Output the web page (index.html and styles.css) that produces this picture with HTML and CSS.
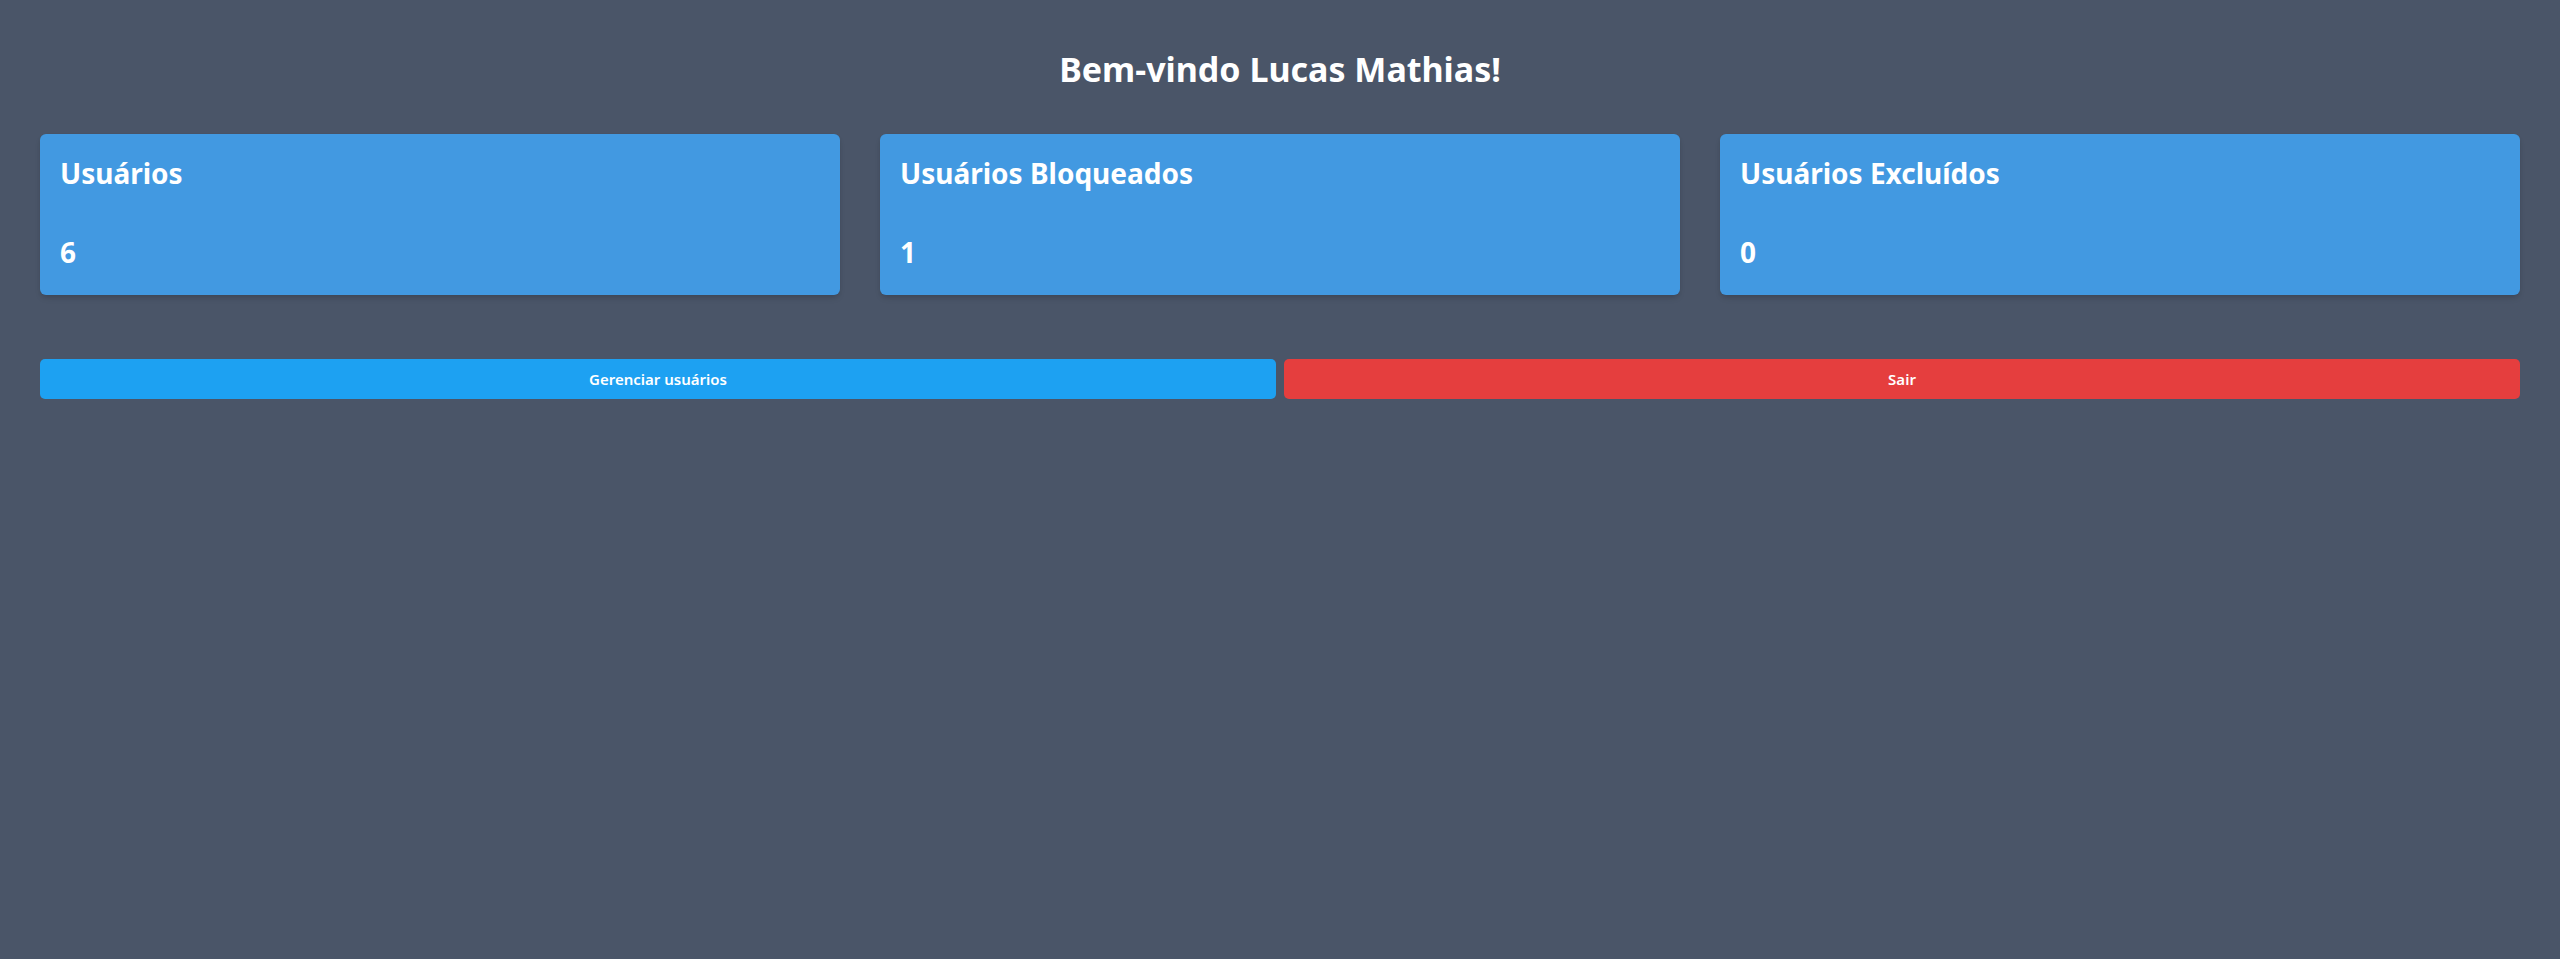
FILE: index.html
```html
<!DOCTYPE html>
<html lang="pt-BR">
<head>
<meta charset="utf-8">
<title>Dashboard</title>
<link rel="stylesheet" href="styles.css">
</head>
<body>
<main class="page">
  <h1 class="title">Bem-vindo Lucas Mathias!</h1>
  <section class="cards">
    <div class="card">
      <h2 class="card-title">Usuários</h2>
      <p class="card-value">6</p>
    </div>
    <div class="card">
      <h2 class="card-title">Usuários Bloqueados</h2>
      <p class="card-value">1</p>
    </div>
    <div class="card">
      <h2 class="card-title">Usuários Excluídos</h2>
      <p class="card-value">0</p>
    </div>
  </section>
  <div class="actions">
    <button class="btn btn-blue">Gerenciar usuários</button>
    <button class="btn btn-red">Sair</button>
  </div>
</main>
</body>
</html>
```

FILE: styles.css
```css
* { box-sizing: border-box; }
html, body {
  margin: 0;
  padding: 0;
  background: #4a5568;
  min-height: 100%;
}
body {
  font-family: "Noto Sans", "Open Sans", "DejaVu Sans", sans-serif;
  color: #ffffff;
  min-height: 959px;
}
.page {
  padding: 49px 40px 40px;
}
.title {
  margin: 0 0 45px;
  font-size: 34px;
  line-height: 40px;
  font-weight: 700;
  text-align: center;
}
.cards {
  display: grid;
  grid-template-columns: repeat(3, 1fr);
  gap: 40px;
}
.card {
  background: #4299e1;
  border-radius: 6px;
  padding: 21px 20px 20px;
  height: 161px;
  box-shadow: 0 4px 6px -1px rgba(0,0,0,0.12), 0 2px 4px -1px rgba(0,0,0,0.08);
}
.card-title {
  margin: 0;
  font-size: 28px;
  line-height: 36px;
  font-weight: 700;
}
.card-value {
  margin: 43px 0 0;
  font-size: 28px;
  line-height: 36px;
  font-weight: 700;
}
.actions {
  display: flex;
  gap: 8px;
  margin-top: 64px;
}
.btn {
  flex: 1;
  height: 40px;
  border: 0;
  border-radius: 5px;
  color: #ffffff;
  font-family: "Noto Sans", "Open Sans", "DejaVu Sans", sans-serif;
  font-size: 15px;
  font-weight: 600;
  cursor: pointer;
}
.btn-blue { background: #1da1f2; }
.btn-red { background: #e53e3e; }
```
